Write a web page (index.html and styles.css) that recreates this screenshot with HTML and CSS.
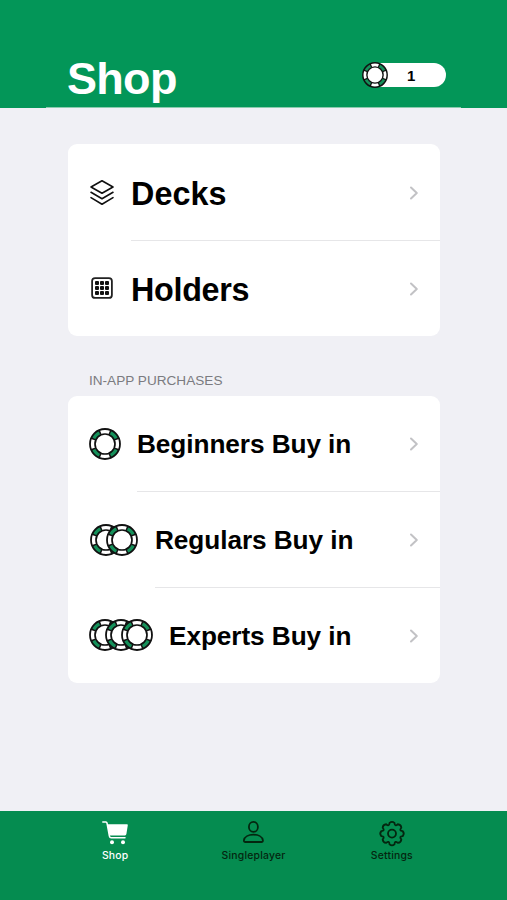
FILE: index.html
```
<!DOCTYPE html>
<html lang="en">
<head>
    <meta charset="UTF-8">
    <meta name="viewport" content="width=device-width, initial-scale=1.0">
    <title>Shop</title>
    <link rel="stylesheet" href="styles.css">
</head>
<body>
    <!-- Shared icons -->
    <svg class="defs" aria-hidden="true">
        <symbol id="chip" viewBox="0 0 32 32">
            <circle cx="16" cy="16" r="15" fill="#fff"/>
            <circle cx="16" cy="16" r="12.5" fill="none" stroke="#15905a" stroke-width="5" pathLength="360" stroke-dasharray="42 48" stroke-dashoffset="-24"/>
            <circle cx="16" cy="16" r="12.5" fill="none" stroke="#111" stroke-width="5" pathLength="360" stroke-dasharray="7 36 7 40" stroke-dashoffset="-20"/>
            <circle cx="16" cy="16" r="15" fill="none" stroke="#111" stroke-width="1.8"/>
            <circle cx="16" cy="16" r="10" fill="#fff" stroke="#111" stroke-width="1.7"/>
        </symbol>
        <symbol id="chevron" viewBox="0 0 10 16">
            <path d="M2 2.5 L7.8 8 L2 13.5" fill="none" stroke="#c2c2c5" stroke-width="2" stroke-linecap="round" stroke-linejoin="round"/>
        </symbol>
    </svg>

    <header class="header">
        <h1>Shop</h1>
        <div class="balance">
            <svg class="balance-chip"><use href="#chip"/></svg>
            <span>1</span>
        </div>
    </header>

    <main class="content">
        <section class="card">
            <a class="row row-large">
                <svg class="icon" viewBox="0 0 26 28" fill="none" stroke="#111" stroke-width="1.6" stroke-linejoin="round" stroke-linecap="round">
                    <path d="M13 1.8 L24 8 L13 14.3 L2 8 Z"/>
                    <path d="M2 13.3 L13 19.8 L24 13.3"/>
                    <path d="M2 18.6 L13 25.2 L24 18.6"/>
                </svg>
                <span class="row-body"><span class="decks">Decks</span><svg class="chevron"><use href="#chevron"/></svg></span>
            </a>
            <a class="row row-large">
                <svg class="icon" viewBox="0 0 26 28" fill="#111">
                    <rect x="3.1" y="3.1" width="19.8" height="19.8" rx="3" fill="none" stroke="#222" stroke-width="1.8"/>
                    <rect x="6" y="6" width="4" height="4" rx="1"/>
                    <rect x="11" y="6" width="4" height="4" rx="1"/>
                    <rect x="16" y="6" width="4" height="4" rx="1"/>
                    <rect x="6" y="11" width="4" height="4" rx="1"/>
                    <rect x="11" y="11" width="4" height="4" rx="1"/>
                    <rect x="16" y="11" width="4" height="4" rx="1"/>
                    <rect x="6" y="16" width="4" height="4" rx="1"/>
                    <rect x="11" y="16" width="4" height="4" rx="1"/>
                    <rect x="16" y="16" width="4" height="4" rx="1"/>
                </svg>
                <span class="row-body"><span class="holders">Holders</span><svg class="chevron"><use href="#chevron"/></svg></span>
            </a>
        </section>

        <h2>IN-APP PURCHASES</h2>

        <section class="card">
            <a class="row">
                <span class="chips"><svg><use href="#chip"/></svg></span>
                <span class="row-body"><span>Beginners Buy in</span><svg class="chevron"><use href="#chevron"/></svg></span>
            </a>
            <a class="row">
                <span class="chips chips-two"><svg><use href="#chip"/></svg><svg><use href="#chip"/></svg></span>
                <span class="row-body"><span>Regulars Buy in</span><svg class="chevron"><use href="#chevron"/></svg></span>
            </a>
            <a class="row">
                <span class="chips"><svg><use href="#chip"/></svg><svg><use href="#chip"/></svg><svg><use href="#chip"/></svg></span>
                <span class="row-body"><span>Experts Buy in</span><svg class="chevron"><use href="#chevron"/></svg></span>
            </a>
        </section>
    </main>

    <nav class="tabbar">
        <a class="tab active">
            <svg viewBox="0 0 28 26">
                <path d="M1.8 2 H4.9 Q5.8 2 6 3 L8.4 16.2 Q8.7 17.8 10.2 17.8 H24" fill="none" stroke="currentColor" stroke-width="1.5" stroke-linecap="round"/>
                <path d="M6.2 4.2 H26 Q27 4.2 26.8 5.2 L25.4 14 Q25.2 15.4 24 15.5 H8.3 Z" fill="currentColor"/>
                <circle cx="11" cy="22.2" r="2" fill="currentColor"/>
                <circle cx="22" cy="22.2" r="2" fill="currentColor"/>
            </svg>
            <span>Shop</span>
        </a>
        <a class="tab">
            <svg viewBox="0 0 28 26" fill="none" stroke="currentColor" stroke-width="1.8">
                <ellipse cx="14.4" cy="6.9" rx="4.5" ry="5"/>
                <path d="M6.4 22 Q4.8 22 4.9 20.3 C5.4 16.8 9.4 14.7 14.4 14.7 S23.4 16.8 23.9 20.3 Q24 22 22.4 22 Z"/>
            </svg>
            <span>Singleplayer</span>
        </a>
        <a class="tab">
            <svg viewBox="0 0 28 26" fill="none" stroke="currentColor" stroke-width="1.8" stroke-linejoin="round">
                <g transform="translate(14 13.6)">
                    <path d="M10.72 2.47 Q6.65 2.76 9.33 5.83 Q9.05 9.05 5.83 9.33 Q2.76 6.65 2.47 10.72 Q0 12.8 -2.47 10.72 Q-2.76 6.65 -5.83 9.33 Q-9.05 9.05 -9.33 5.83 Q-6.65 2.76 -10.72 2.47 Q-12.8 0 -10.72 -2.47 Q-6.65 -2.76 -9.33 -5.83 Q-9.05 -9.05 -5.83 -9.33 Q-2.76 -6.65 -2.47 -10.72 Q0 -12.8 2.47 -10.72 Q2.76 -6.65 5.83 -9.33 Q9.05 -9.05 9.33 -5.83 Q6.65 -2.76 10.72 -2.47 Q12.8 0 10.72 2.47 Z"/>
                    <circle r="4"/>
                </g>
            </svg>
            <span>Settings</span>
        </a>
    </nav>
</body>
</html>
```
FILE: styles.css
```
* {
    box-sizing: border-box;
}
body {
    margin: 0;
    height: 900px;
    display: flex;
    flex-direction: column;
    font-family: "Liberation Sans", Arial, sans-serif;
    background: #f0f0f5;
    color: #000;
    overflow: hidden;
}
svg {
    display: block;
    flex: none;
    overflow: visible;
}
.defs {
    display: none;
}
.header {
    height: 108px;
    padding: 52px 61px 0 67px;
    display: flex;
    justify-content: space-between;
    background:
        linear-gradient(#8bcbae, #8bcbae) 46px 107px / 415px 1px no-repeat,
        #039658;
}
.header h1 {
    margin: 0;
    font-size: 45px;
    line-height: 54px;
    letter-spacing: -0.7px;
    color: #fff;
}
.balance {
    width: 78px;
    height: 24px;
    margin-top: 11px;
    display: flex;
    align-items: center;
    border-radius: 12px;
    background: #fff;
    font-size: 15px;
    font-weight: bold;
}
.balance-chip {
    width: 26px;
    height: 26px;
    margin: 0 19px 0 -6px;
}
.content {
    flex: 1;
    padding: 36px 67px 0 68px;
}
.card {
    border-radius: 9px;
    background: #fff;
    overflow: hidden;
}
.row {
    height: 95.8px;
    padding-left: 21px;
    display: flex;
    align-items: center;
    font-size: 26.2px;
    font-weight: bold;
    letter-spacing: -0.07px;
}
.row-large {
    height: 96px;
    font-size: 32.3px;
}
.row-large:first-child {
    height: 97px;
}
.row-large:last-child {
    height: 95px;
}
.row:not(.row-large):last-child .row-body {
    padding-top: 3px;
}
.icon {
    width: 26px;
    height: 28px;
    margin-right: 16px;
}
.row-body {
    flex: 1;
    height: 100%;
    padding: 2px 21px 0 0;
    display: flex;
    align-items: center;
    justify-content: space-between;
    border-bottom: 1px solid #e6e6e8;
}
.row:last-child .row-body {
    border-bottom-color: transparent;
}
.row-large .row-body {
    padding-top: 4px;
}
.decks {
    letter-spacing: 0.1px;
}
.holders {
    letter-spacing: -0.3px;
}
.chevron {
    width: 10px;
    height: 16px;
}
.row-large .chevron {
    margin-bottom: 3px;
}
.chips {
    display: flex;
    margin-right: 16px;
}
.chips-two {
    padding-left: 1px;
    margin-right: 17px;
}
.chips svg {
    width: 32px;
    height: 32px;
}
.chips svg + svg {
    margin-left: -16px;
}
h2 {
    margin: 36px 0 7px 21px;
    font-size: 13.6px;
    font-weight: normal;
    line-height: 17px;
    color: #7b7b80;
}
.tabbar {
    height: 89px;
    padding: 9px 46px 0;
    display: flex;
    background: #058c50;
}
.tab {
    flex: 1;
    display: flex;
    flex-direction: column;
    align-items: center;
    gap: 3px;
    font-family: Inter, sans-serif;
    font-size: 10.4px;
    font-weight: 500;
    line-height: 14px;
    letter-spacing: 0.2px;
    color: #04260f;
}
.tab svg {
    width: 28px;
    height: 26px;
}
.tab.active {
    color: #fff;
}
```
